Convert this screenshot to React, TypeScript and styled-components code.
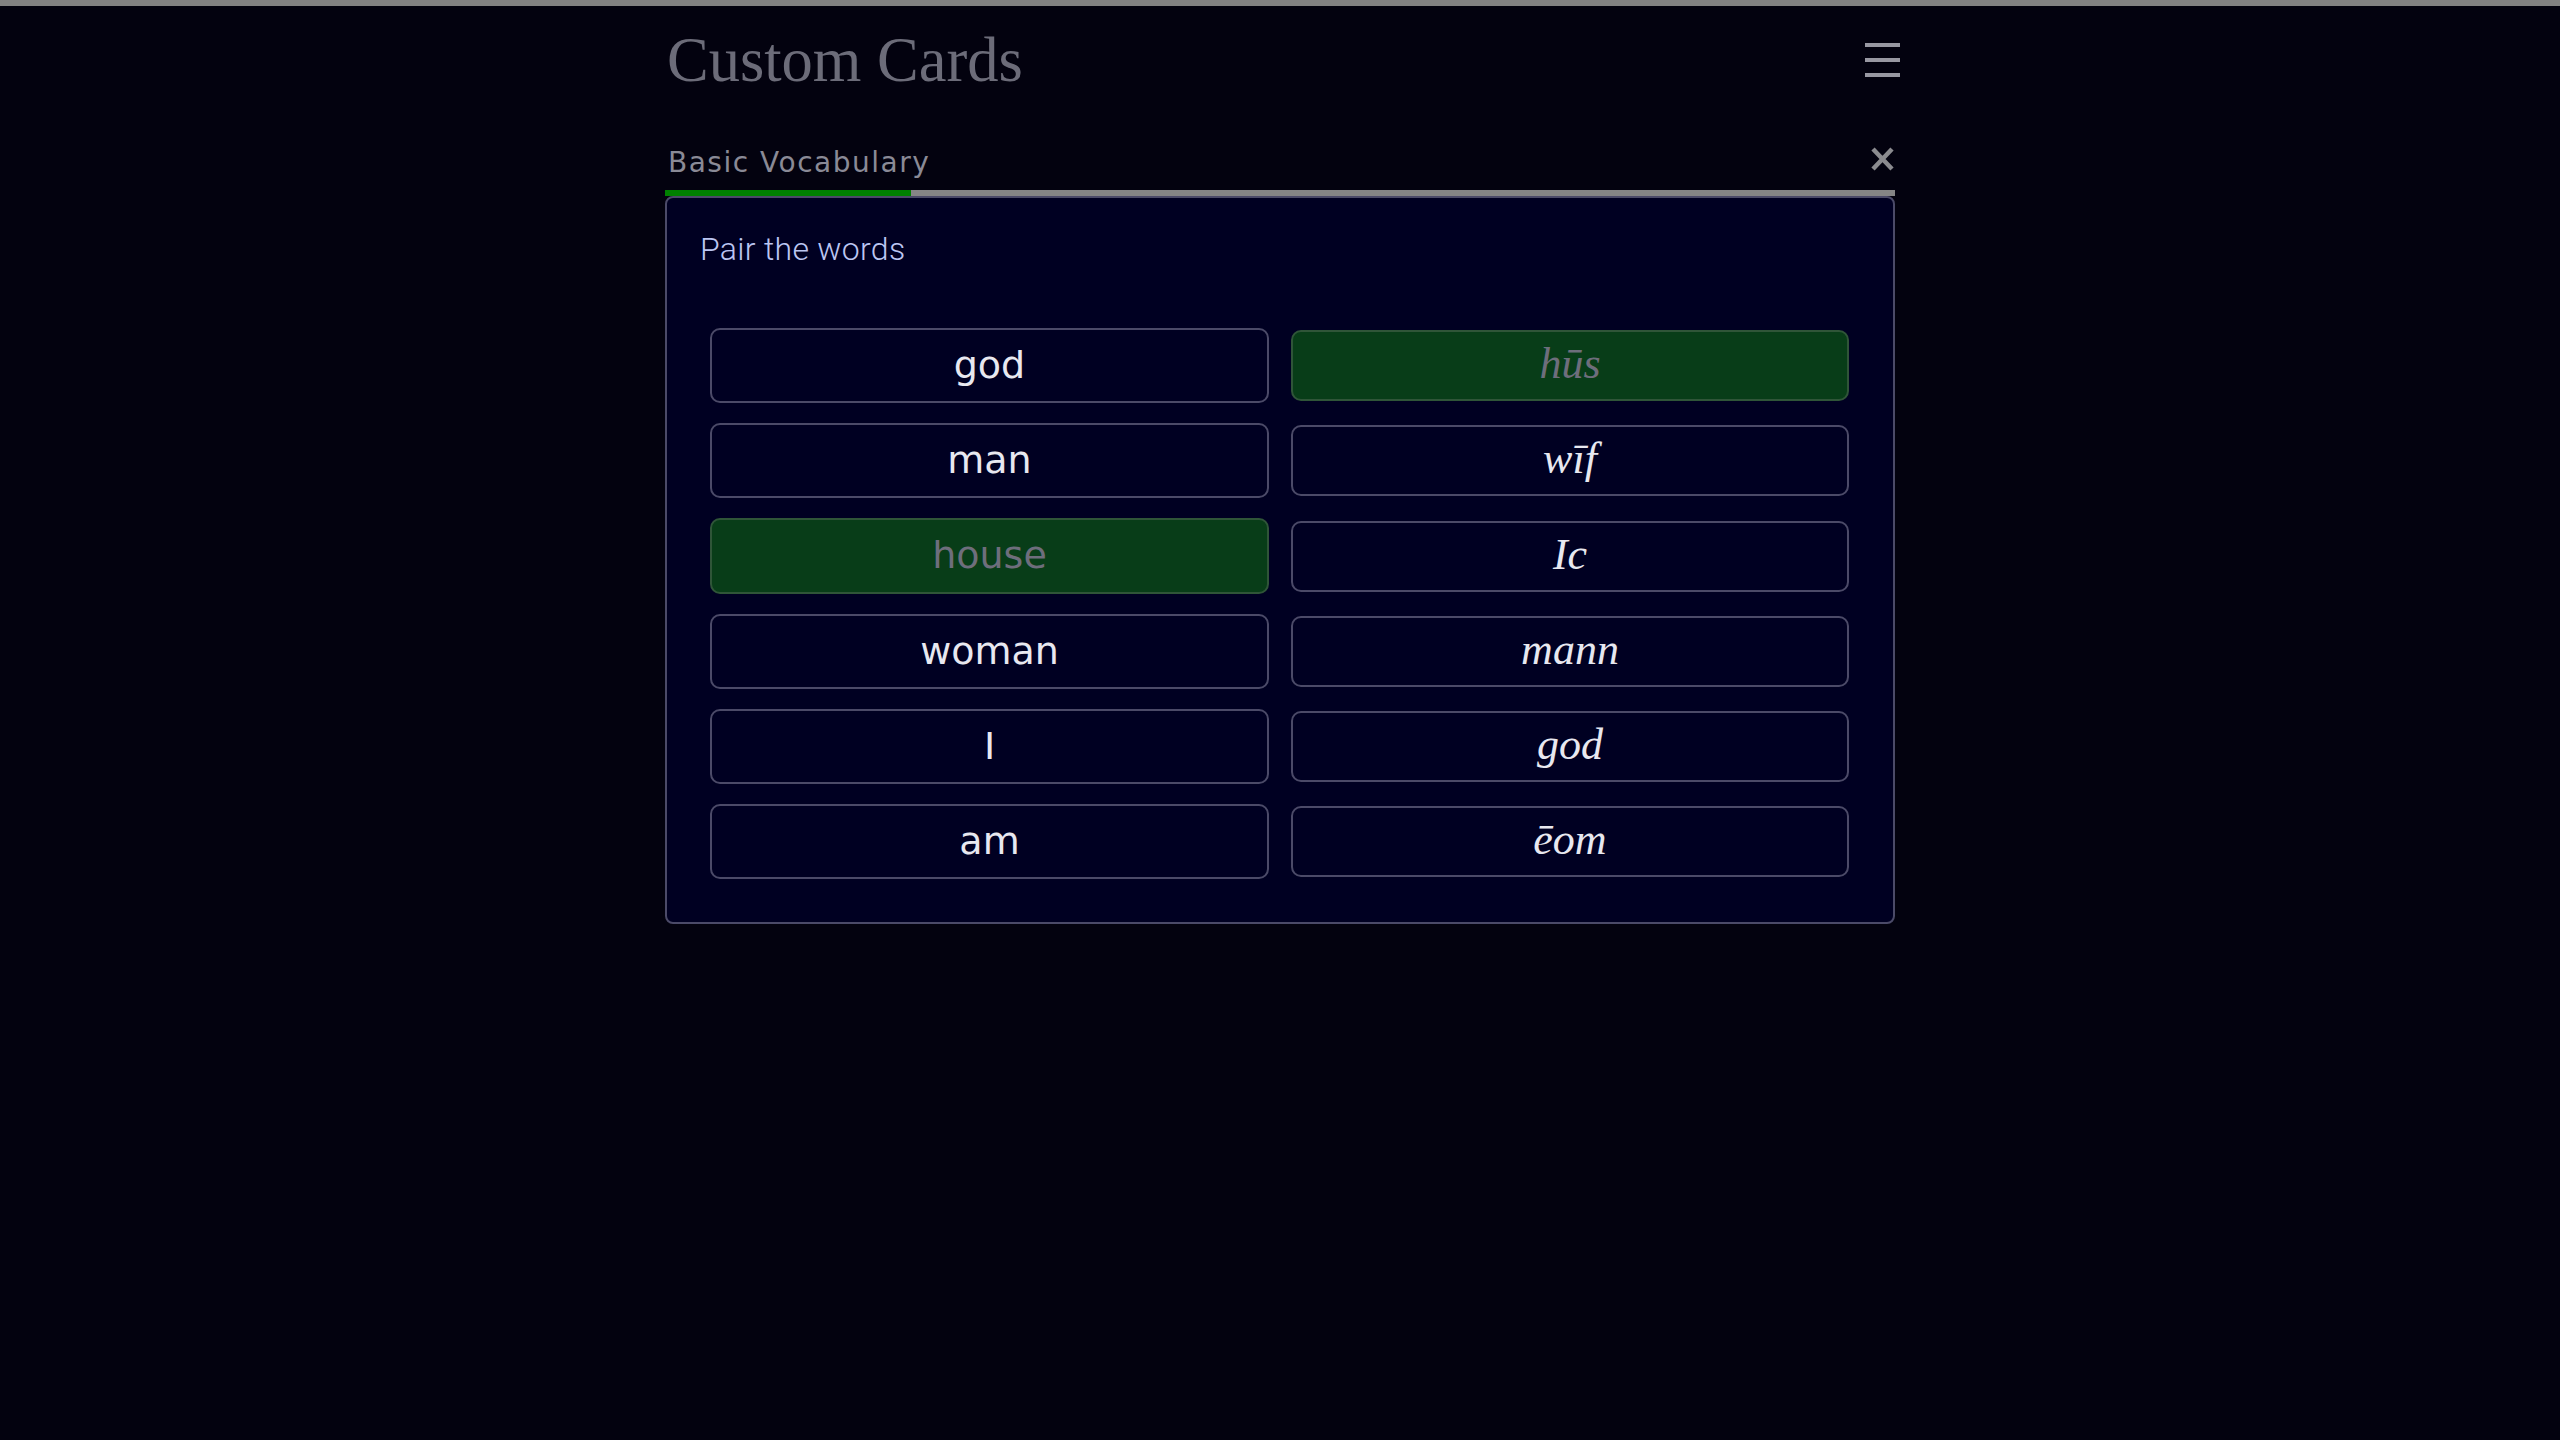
import React, { useState } from "react";
import styled, { createGlobalStyle } from "styled-components";

const GlobalStyle = createGlobalStyle`
  html, body {
    margin: 0;
    padding: 0;
    background: #03020f;
    min-height: 100%;
  }
  body {
    font-family: "DejaVu Sans", sans-serif;
  }
`;

type Pair = { en: string; oe: string };

const pairs: Pair[] = [
  { en: "god", oe: "hūs" },
  { en: "man", oe: "wīf" },
  { en: "house", oe: "Ic" },
  { en: "woman", oe: "mann" },
  { en: "I", oe: "god" },
  { en: "am", oe: "ēom" },
];

const App: React.FC = () => {
  const [matchedLeft] = useState<string[]>(["house"]);
  const [matchedRight] = useState<string[]>(["hūs"]);

  return (
    <>
      <GlobalStyle />
      <TopStrip />
      <Page>
        <Header>
          <Title>Custom Cards</Title>
          <MenuButton aria-label="menu">
            <span />
            <span />
            <span />
          </MenuButton>
        </Header>

        <DeckRow>
          <DeckName>Basic Vocabulary</DeckName>
          <CloseButton aria-label="close">
            <svg width="25" height="24" viewBox="0 0 25 24">
              <path
                d="M3 2 L22 22 M22 2 L3 22"
                stroke="#8b8b8f"
                strokeWidth="4.5"
                strokeLinecap="butt"
              />
            </svg>
          </CloseButton>
        </DeckRow>

        <Progress>
          <ProgressFill style={{ width: "20%" }} />
        </Progress>

        <Card>
          <Instruction>Pair the words</Instruction>
          <PairGrid>
            {pairs.map((p) => (
              <React.Fragment key={p.en + p.oe}>
                <Choice $matched={matchedLeft.includes(p.en)}>{p.en}</Choice>
                <Choice $serif $matched={matchedRight.includes(p.oe)}>
                  {p.oe}
                </Choice>
              </React.Fragment>
            ))}
          </PairGrid>
        </Card>
      </Page>
    </>
  );
};

const TopStrip = styled.div`
  height: 6px;
  background: #828282;
`;

const Page = styled.main`
  width: 1230px;
  margin: 0 auto;
  padding-top: 23px;
`;

const Header = styled.header`
  display: flex;
  align-items: center;
  justify-content: space-between;
`;

const Title = styled.h1`
  margin: 0;
  font-family: "Liberation Serif", serif;
  font-weight: normal;
  font-size: 62.5px;
  line-height: 62px;
  color: #6c6c79;
  margin-left: 2px;
`;

const MenuButton = styled.button`
  display: flex;
  flex-direction: column;
  justify-content: space-between;
  width: 35px;
  height: 34px;
  padding: 0;
  margin-right: -5px;
  border: none;
  background: transparent;
  cursor: pointer;

  span {
    display: block;
    height: 4px;
    background: #9898a2;
  }
`;

const DeckRow = styled.div`
  display: flex;
  align-items: center;
  justify-content: space-between;
  margin-top: 56px;
  height: 32px;
  margin-bottom: 11px;
`;

const DeckName = styled.h2`
  margin: 0;
  font-family: "DejaVu Sans", sans-serif;
  font-weight: normal;
  font-size: 28px;
  letter-spacing: 1.5px;
  line-height: 32px;
  color: #8a8a96;
  margin-left: 3px;
`;

const CloseButton = styled.button`
  display: flex;
  padding: 0;
  margin-top: -8px;
  border: none;
  background: transparent;
  cursor: pointer;
`;

const Progress = styled.div`
  height: 6px;
  background: #858585;
`;

const ProgressFill = styled.div`
  height: 100%;
  background: #008000;
`;

const Card = styled.section`
  border: 2px solid #4b4a68;
  border-radius: 8px;
  background: #000022;
  padding: 33px 0 43px;
`;

const Instruction = styled.p`
  margin: 0 0 61px;
  padding: 0 33px;
  font-family: Roboto, sans-serif;
  font-weight: 300;
  font-size: 32px;
  letter-spacing: 0.3px;
  line-height: 36px;
  color: #bcc6f2;
`;

const PairGrid = styled.div`
  display: grid;
  grid-template-columns: 559px 558px;
  column-gap: 22px;
  row-gap: 20px;
  align-items: center;
  padding: 0 42px 0 43px;
`;

const Choice = styled.button<{ $serif?: boolean; $matched?: boolean }>`
  display: block;
  width: 100%;
  margin: 0;
  border: 2px solid ${({ $matched }) => ($matched ? "#2f5538" : "#4b4a68")};
  border-radius: 10px;
  background: ${({ $matched }) => ($matched ? "#083d18" : "transparent")};
  color: ${({ $matched }) => ($matched ? "#6e6e7c" : "#e8e8f0")};
  text-align: center;
  cursor: pointer;
  font-family: ${({ $serif }) =>
    $serif ? '"Liberation Serif", serif' : '"DejaVu Sans", sans-serif'};
  font-style: ${({ $serif }) => ($serif ? "italic" : "normal")};
  font-size: ${({ $serif }) => ($serif ? "44px" : "38px")};
  line-height: ${({ $serif }) => ($serif ? "43px" : "47.2px")};
  padding: ${({ $serif }) => ($serif ? "10px 0 14px" : "12px 0")};
`;

export default App;
